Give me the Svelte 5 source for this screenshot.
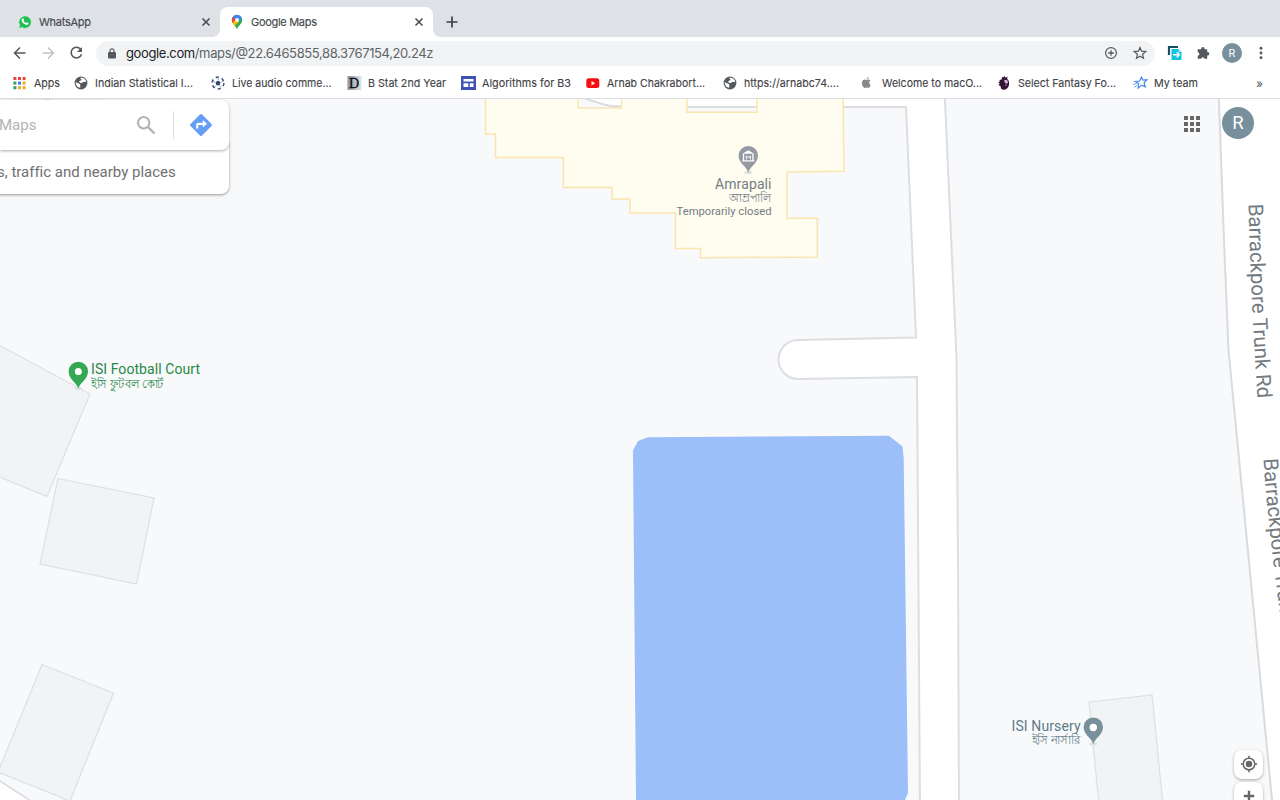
<script>
  const bookmarks = [
    { icon: 'apps', label: 'Apps', width: 61, text: 26 },
    { icon: 'globe', label: 'Indian Statistical I...', width: 137, text: 98 },
    { icon: 'ball', label: 'Live audio comme...', width: 136, text: 99.5 },
    { icon: 'dee', label: 'B Stat 2nd Year', width: 114, text: 78 },
    { icon: 'sites', label: 'Algorithms for B3', width: 125, text: 89 },
    { icon: 'youtube', label: 'Arnab Chakrabort...', width: 137, text: 98 },
    { icon: 'globe', label: 'https://arnabc74....', width: 138, text: 95 },
    { icon: 'apple', label: 'Welcome to macO...', width: 136, text: 100 },
    { icon: 'lion', label: 'Select Fantasy Fo...', width: 136, text: 98 },
    { icon: 'star', label: 'My team', width: 90, text: 44 }
  ];
  const dotColors = ['#e5453b', '#e5453b', '#e5453b', '#30a050', '#3c7ee8', '#efab24', '#30a050', '#efab24', '#efab24'];
  const gridCells = [0, 1, 2, 3, 4, 5, 6, 7, 8];
</script>

{#snippet cross()}
  <svg class="cross" width="10" height="10" viewBox="0 0 10 10"><path d="M1.500 1.500l7 7M8.500 1.500l-7 7" stroke="#45484c" stroke-width="1.500" /></svg>
{/snippet}

{#snippet pin(x, y, color)}
  <g transform="translate({x} {y})">
    <ellipse cx="0" cy="26.500" rx="4" ry="1.700" fill="#dfe2e4" />
    <path d="M0 27C-1 21-9.700 17.500-9.700 9.600A9.700 9.700 0 0 1 9.700 9.600C9.700 17.500 1 21 0 27z" fill={color} />
  </g>
{/snippet}

{#snippet bookmarkIcon(name)}
  <svg width="16" height="16" viewBox="0 0 16 16">
    {#if name === 'apps'}
      {#each dotColors as c, i}
        <rect x={.4 + (i % 3) * 4.6} y={2 + Math.floor(i / 3) * 4.6} width="3" height="3" fill={c} />
      {/each}
    {:else if name === 'globe'}
      <circle cx="7" cy="8" r="6.400" fill="#55585c" />
      <path d="M1.800 6.800c1.200 1.700 3.200 1.200 4.200 2.400.9 1.300-.2 2 .4 3.600C3.700 12.800 1.300 10 1.800 6.800zM6.300 3c2.500-.9 4.800.3 5.900 3.200-.3 1.200-1.600.6-2.500.5-1.200 0-1.200 1.500-2.600 1.400-1.500-.1-2.400-1.200-1.600-2 .6-.7 2.200-.2 2-1.500-.1-.7-1.300-.6-1.200-1.600z" fill="#fff" />
    {:else if name === 'ball'}
      <circle cx="7" cy="8" r="5.900" fill="none" stroke="#3f5080" stroke-width="1.500" stroke-dasharray="3.200 3" />
      <path d="M7 5.500l2.500 1.800-.9 2.900H5.400l-.9-2.900z" fill="#31426f" />
      <path d="M7 5V3M10 7l2-.5M9 10.500l1.200 1.700M5 10.500l-1.200 1.700M4 7L2 6.500" stroke="#8d9bc0" stroke-width=".9" />
    {:else if name === 'dee'}
      <defs><linearGradient id="dg"><stop offset="0" stop-color="#8f929b" /><stop offset="1" stop-color="#e3e4e8" /></linearGradient></defs>
      <rect x=".5" y="1" width="14" height="14" fill="url(#dg)" />
      <text x="2" y="13" font-family="Liberation Serif, serif" font-size="14" stroke="#08080c" stroke-width=".3" fill="#08080c">D</text>
    {:else if name === 'sites'}
      <rect x="0" y="1" width="15" height="14" fill="#3f51b5" />
      <path d="M2.500 4h10v2.600h-10zM2.500 8.200h4.800v3.900H2.500zM8.800 8.200h3.700v3.900H8.800z" fill="#fff" />
    {:else if name === 'youtube'}
      <rect x=".3" y="3.300" width="13" height="9.800" rx="2.500" fill="#f50f0f" />
      <path d="M5.500 6v4.400L9.100 8.200z" fill="#fff" />
    {:else if name === 'apple'}
      <path transform="translate(-1.200 0)" d="M7 4.100C7 2.700 8 1.800 8.700 1.700c.1 1.300-.7 2.300-1.700 2.400zM6.600 4.900c.6 0 1-.4 1.900-.4.800 0 1.600.4 2.100 1.100-1.800 1.100-1.500 3.600.3 4.300-.5 1.400-1.400 3.100-2.300 3.100-.7 0-.9-.4-1.700-.4s-1.100.4-1.700.4C3.700 13 2 9.900 2.200 7.700c.1-2 1.300-3.200 2.600-3.200.8 0 1.300.4 1.800.4z" fill="#88898b" />
    {:else if name === 'lion'}
      <path d="M5 1.500l1 1.300L7.500.8l.6 1.800 2.500-.6-.5 2c1.600.8 2.200 3 1.900 5.500-.2 2.500-2.200 5.300-5.200 5.300-2.400 0-3.300-1.600-3-3.300L1.500 10l1.300-1.300-1.500-1.400 1.700-1L2.300 5l2.400-.6z" fill="#351338" />
      <path d="M7.300 4.800l3 .4.800 2.500-1.800 1-1.800-1.500zM8 9.500l2 .3-1.200 1.200z" fill="#cfbccd" />
    {:else}
      <path d="M8.500 2.200l1.400 3 3.900-.5-2.700 3.100 1.200 4.100-3.500-1.800-3.700 3 .5-4.300L2.500 6.500l4-.5z" fill="none" stroke="#4386e8" stroke-width="1.200" />
      <path d="M.3 9.500l3.500-1.200M1.200 12.200l3-1.700M.8 6.500h2" stroke="#6aa2f2" stroke-width="1" />
    {/if}
  </svg>
{/snippet}

<div class="window">
  <header class="tabs">
    <div class="tab first">
      <svg width="14" height="14" viewBox="0 0 14 14">
        <path d="M.6 13.400l1-3.200A6.300 6.300 0 1 1 4 12.600z" fill="#20bf55" stroke="#f4f6f5" stroke-width=".6" />
        <path d="M4.300 3.500c.5-.5 1-.3 1.200.2l.5 1c.1.400-.6.800-.4 1.200.5 1 1.300 1.700 2.300 2.100.4.100.8-.9 1.200-.7l1.200.7c.6.400-.3 1.900-1.500 1.900C6.200 9.900 3.700 7 3.600 5.300c0-.8.200-1.400.7-1.800z" fill="#fff" />
      </svg>
      <svg class="tabtext" width="54" height="16"><text x="0" y="12" textLength="52">WhatsApp</text></svg>
      {@render cross()}
    </div>
    <div class="tab active">
      <svg width="12" height="16" viewBox="0 0 12 16">
        <defs><clipPath id="mp"><path d="M6 15.300C5.200 11.800.8 10 .8 5.900a5.200 5.200 0 0 1 10.400 0C11.200 10 6.800 11.800 6 15.300z" /></clipPath></defs>
        <g clip-path="url(#mp)">
          <rect width="12" height="16" fill="#34a853" />
          <path d="M0 9L4.200 4.500 8 7.500 2.500 13z" fill="#fbbc04" />
          <path d="M0 0h4L6 4 2 8.500-1 8z" fill="#ea4335" />
          <path d="M2.500 0H12v3.500L8 7 6 3.500 3.800 5 1.500 2.700z" fill="#4285f4" />
        </g>
        <circle cx="6" cy="5.900" r="1.900" fill="#fff" />
      </svg>
      <svg class="tabtext" width="69" height="16"><text x="0" y="12" textLength="66">Google Maps</text></svg>
      {@render cross()}
    </div>
    <svg class="plus" width="12" height="12" viewBox="0 0 12 12"><path d="M6 .5v11M.5 6h11" stroke="#3c4043" stroke-width="1.700" /></svg>
  </header>

  <div class="toolbar">
    <svg class="nav" width="14" height="14" viewBox="0 0 14 14"><path d="M12.500 7H2M7 1.500L1.500 7 7 12.500" fill="none" stroke="#55585c" stroke-width="1.500" /></svg>
    <svg class="nav" width="14" height="14" viewBox="0 0 14 14"><path d="M1.500 7H12M7 1.500L12.500 7 7 12.500" fill="none" stroke="#bfc1c4" stroke-width="1.500" /></svg>
    <svg class="nav" width="14" height="14" viewBox="0 0 14 14"><path d="M11.500 3.200A5.300 5.300 0 1 0 12.500 8.200" fill="none" stroke="#55585c" stroke-width="1.600" /><path d="M13 1v5H8z" fill="#55585c" /></svg>
    <div class="address">
      <svg width="8" height="11" viewBox="0 0 8 11"><rect y="4" width="8" height="6.500" rx="1" fill="#55585c" /><path d="M2 4.500V2.800a2 2 0 0 1 4 0v1.700" fill="none" stroke="#55585c" stroke-width="1.200" /></svg>
      <svg class="url" width="312" height="20"><text x="0" y="14.500" textLength="307.500" font-size="13"><tspan fill="#202124">google.com</tspan><tspan fill="#606368">/maps/@22.6465855,88.3767154,20.24z</tspan></text></svg>
      <svg class="zoomicon" width="14" height="14" viewBox="0 0 14 14"><circle cx="7" cy="7" r="5.400" fill="none" stroke="#55585c" stroke-width="1.200" /><path d="M7 4.200v5.600M4.200 7h5.600" stroke="#55585c" stroke-width="1.300" /></svg>
      <svg width="14" height="14" viewBox="0 0 14 14"><path d="M7 1.500l1.600 3.700 4.100.4-3.100 2.700.9 4L7 10.200l-3.500 2.100.9-4-3.100-2.700 4.100-.4z" fill="none" stroke="#55585c" stroke-width="1.200" /></svg>
    </div>
    <svg class="ext" width="16" height="16" viewBox="0 0 16 16">
      <path d="M2 10V2h9" fill="none" stroke="#184c69" stroke-width="2.200" />
      <path d="M4.500 4h7l3 3v8h-10z" fill="#16c1dc" /><path d="M11.500 4l3 3h-3z" fill="#9beaf4" />
      <path d="M6 9.700h6M9.800 7.200l2.500 2.500-2.500 2.500" fill="none" stroke="#fff" stroke-width="1.500" />
    </svg>
    <svg class="puzzle" width="14" height="14" viewBox="0 0 14 14"><path d="M4.300 3.200h1a1.700 1.700 0 1 1 3.200 0h2.700v3a1.700 1.700 0 1 1 0 3.300v3.300H8.400a1.600 1.600 0 0 0-3.200 0H1.700V9.700a1.700 1.700 0 0 0 0-3.400V3.200z" fill="#55585c" /></svg>
    <div class="small avatar">R</div>
    <svg class="dots" width="4" height="14" viewBox="0 0 4 14"><circle cx="2" cy="2.200" r="1.450" fill="#55585c" /><circle cx="2" cy="7" r="1.450" fill="#55585c" /><circle cx="2" cy="11.800" r="1.450" fill="#55585c" /></svg>
  </div>

  <nav class="bookmarks">
    {#each bookmarks as b}
      <div class="bookmark" style:width="{b.width}px">
        {@render bookmarkIcon(b.icon)}
        <svg class="label" width={b.text + 8} height="16"><text x="0" y="12" textLength={b.text} lengthAdjust="spacingAndGlyphs">{b.label}</text></svg>
      </div>
    {/each}
    <span class="more">»</span>
  </nav>

  <main>
    <svg class="map" width="1280" height="701" viewBox="0 99 1280 701">
      <rect y="99" width="1280" height="701" fill="#f7f9fb" />
      <path d="M16 90V108H101V90M38 98L56 101" fill="#f1f2f4" stroke="#dedfe1" />
      <g fill="#f1f3f4" stroke="#dddfe2" stroke-width="1.200">
        <path d="M-5 343L90 394 47 496.500-5 475z" />
        <path d="M58 478.500L154 498 136.500 584 40 564z" />
        <path d="M42 664.500L113.500 693 70 801-2 772z" />
        <path d="M1089 702L1152 695 1163 805 1099 805z" />
      </g>
      <path d="M-3 779L34 803H-3z" fill="#fff" stroke="#dadce0" stroke-width="1.700" />
      <path d="M560 90V107H906L916 337.500 798 340A19.500 19.500 0 0 0 798 379L917 377 920 810H959L958 560 956.500 358 944.500 90z" fill="#fff" stroke="#dcdee1" stroke-width="2" />
      <path d="M1218.500 90L1224 240 1228.500 350 1272.500 805H1290V90z" fill="#fff" stroke="#d9dbde" stroke-width="2" />
      <path fill-rule="evenodd" d="M485.500 90V134H495.500V157.500H563.500V187.500H612V199H630V213H675.500V248.500H700.500V257.800L817.300 257V218.300H787V172L844 171.300 843 90zM578 90V108H621.500V90zM687 90V112.300H757V90z" fill="#fffcf0" stroke="#fbe5ad" stroke-width="1.500" />
      <path d="M578.800 99V107.300H620.800V99z" fill="#f7f9fb" />
      <path d="M585 98Q603 105 613 106.200H620.700V98z" fill="#fff" />
      <path d="M584 98Q603 105 613 106.200H620.700" fill="none" stroke="#d9dbde" stroke-width="2" />
      <path d="M633 450.500L638 441 648 437.300 889 435.700 902.500 446.500 903.700 458 908 793 905 800H636z" fill="#9cbff9" />

      {@render pin(748.300, 146, '#9599a3')}
      <path d="M742.300 153.800L748.300 150.300 754.300 153.800z" fill="#fff" />
      <path d="M743.500 154V160.500M753 154V160.500M742.300 160.800H754.300" fill="none" stroke="#fff" stroke-width="1.300" />
      <path d="M746.300 159.500V155.800L748.300 157.800 750.300 155.800V159.500" fill="none" stroke="#fff" stroke-width="1" />
      <g fill="#757c85" class="place" text-anchor="end">
        <text x="771.500" y="189" font-size="14" textLength="56.500">Amrapali</text>
        <text x="771.500" y="202" font-size="11.500" textLength="43" lengthAdjust="spacingAndGlyphs">আম্রপালি</text>
        <text x="771.500" y="215" font-size="11" textLength="95" lengthAdjust="spacingAndGlyphs">Temporarily closed</text>
      </g>
      {@render pin(78.300, 361.800, '#34a853')}
      <circle cx="78.300" cy="371.500" r="3.500" fill="#fff" />
      <g fill="#298846" class="place">
        <text x="91" y="374.300" font-size="14" textLength="109">ISI Football Court</text>
        <text x="91" y="387.500" font-size="11.500" textLength="73" lengthAdjust="spacingAndGlyphs">ইসি ফুটবল কোর্ট</text>
      </g>
      {@render pin(1093.300, 717.500, '#78909c')}
      <circle cx="1093.300" cy="727.500" r="3.700" fill="#fff" />
      <g fill="#607986" class="place" text-anchor="end">
        <text x="1080.500" y="730.500" font-size="14" textLength="69">ISI Nursery</text>
        <text x="1080.500" y="743.500" font-size="11.500" textLength="49" lengthAdjust="spacingAndGlyphs">ইসি নার্সারি</text>
      </g>
      <defs>
        <path id="road1" d="M1248.500 204Q1251 306 1259 420" />
        <path id="road2" d="M1263.500 459Q1269 545 1291 690" />
      </defs>
      <g class="place" fill="#737a80" font-size="20.500">
        <text textLength="195"><textPath href="#road1">Barrackpore Trunk Rd</textPath></text>
        <text textLength="195"><textPath href="#road2">Barrackpore Trunk Rd</textPath></text>
      </g>
    </svg>

    <section class="search">
      <div class="hint">s, traffic and nearby places</div>
      <div class="box">
        <span>Maps</span>
        <svg class="lens" width="20" height="20" viewBox="0 0 20 20"><circle cx="7.700" cy="7.700" r="5.700" fill="none" stroke="#b1b1b1" stroke-width="2" /><path d="M12 12l6.500 6.500" stroke="#b1b1b1" stroke-width="2.400" /></svg>
        <i></i>
        <svg class="directions" width="24" height="24" viewBox="0 0 24 24"><path d="M10.900 1.500a1.500 1.500 0 0 1 2.200 0l9.400 9.400a1.500 1.500 0 0 1 0 2.200l-9.400 9.400a1.500 1.500 0 0 1-2.200 0l-9.400-9.400a1.500 1.500 0 0 1 0-2.200z" fill="#669df6" /><path d="M8.200 15.500V12q0-1.200 1.200-1.200H14.500" fill="none" stroke="#fff" stroke-width="2.200" /><path d="M13.800 7l4.200 3.800-4.200 3.800z" fill="#fff" /></svg>
      </div>
    </section>
    <div class="account">
      <div class="launcher">{#each gridCells as cell (cell)}<b></b>{/each}</div>
      <div class="avatar">R</div>
    </div>
    <div class="controls">
      <button aria-label="Show your location"><svg width="18" height="18" viewBox="0 0 18 18"><circle cx="9" cy="9" r="5.800" fill="none" stroke="#666" stroke-width="1.500" /><circle cx="9" cy="9" r="3.300" fill="#666" /><path d="M9 .8v3M9 14.200v3M.8 9h3M14.200 9h3" stroke="#666" stroke-width="1.500" /></svg></button>
      <button aria-label="Zoom in"><svg width="18" height="18" viewBox="0 0 18 18"><path d="M9 3.800v10.400M3.800 9h10.400" stroke="#666" stroke-width="2.400" /></svg></button>
    </div>
  </main>
</div>

<style>
  :global(body) { margin: 0; overflow: hidden; }
  .window { width: 1280px; height: 800px; overflow: hidden; display: flex; flex-direction: column; font-family: Inter, "Liberation Sans", sans-serif; background: #fff; }
  svg { display: block; flex: none; }
  .tabs { height: 37px; flex: none; background: #dee1e6; display: flex; align-items: flex-end; box-sizing: border-box; }
  .tab { height: 30px; display: flex; align-items: center; box-sizing: border-box; font-size: 11px; }
  .tabtext { margin-right: auto; }
  .tab text { fill: #45494d; font-size: 11px; stroke: #45494d; stroke-width: .15px; }
  .first { width: 220px; padding: 0 9px 0 18px; }
  .first .tabtext { margin-left: 7px; }
  .active { width: 213px; background: #fff; border-radius: 8px 8px 0 0; padding: 0 9px 0 11px; position: relative; }
  .active .tabtext { margin-left: 8px; }
  .active::before, .active::after { content: ""; position: absolute; bottom: 0; width: 7px; height: 7px; }
  .active::before { left: -7px; background: radial-gradient(circle at 0 0, transparent 6.500px, #fff 7px); }
  .active::after { right: -7px; background: radial-gradient(circle at 100% 0, transparent 6.500px, #fff 7px); }
  .plus { margin: 0 0 9px 13px; }
  .toolbar { height: 33px; flex: none; display: flex; align-items: center; padding: 0 0 1px 13px; box-sizing: border-box; }
  .nav { margin-right: 14px; }
  .nav + .nav + .nav { margin-right: 13px; }
  .address { width: 1059px; height: 25px; border-radius: 13px; background: #f1f3f4; display: flex; align-items: center; padding: 0 8px 0 12px; box-sizing: border-box; }
  .url { margin-left: 10px; margin-right: auto; }
  .zoomicon { margin-right: 15px; }
  .ext { margin-left: 12px; }
  .puzzle { margin-left: 13px; }
  .avatar { width: 32px; height: 32px; border-radius: 50%; background: #78909c; color: #fff; display: flex; align-items: center; justify-content: center; font: 18.500px Roboto, sans-serif; }
  .small { width: 20px; height: 20px; font-size: 11px; margin-left: 12px; }
  .dots { margin-left: 16.500px; }
  .bookmarks { height: 29px; flex: none; display: flex; align-items: center; padding: 0 0 2px 13px; border-bottom: 1px solid #dcdee1; box-sizing: border-box; }
  .bookmark { display: flex; align-items: center; flex: none; }
  .label { margin-left: 5px; }
  .label text { font-size: 11px; fill: #3f4246; stroke: #3f4246; stroke-width: .12px; }
  .more { font-size: 12px; color: #505357; margin-left: 33px; }
  main { flex: 1; position: relative; min-height: 0; }
  .place { font-family: Roboto, "Noto Sans", sans-serif; }
  .search { position: absolute; left: 0; top: 0; width: 229px; height: 95px; display: flex; flex-direction: column-reverse; font-family: Roboto, sans-serif; font-size: 15px; }
  .hint { height: 52px; margin-top: -8px; padding-top: 8px; box-sizing: border-box; display: flex; align-items: center; background: #fff; color: #707070; border-radius: 0 0 8px 0; box-shadow: 0 1px 3px #0006; white-space: nowrap; letter-spacing: -.01px; margin-left: -3px; }
  .box { height: 50px; margin-top: 1px; display: flex; align-items: center; background: #fff; border-radius: 0 8px 8px 0; box-shadow: 0 1px 3px #0005; color: #b3b3b3; z-index: 1; }
  .lens { margin-left: auto; }
  .box span { margin-left: -1px; }
  i { height: 28px; width: 1px; background: #dedede; margin: 0 15px 0 17px; }
  .directions { margin-right: 16px; }
  .account { position: absolute; top: 8px; right: 26px; display: flex; align-items: center; gap: 21px; }
  .launcher { display: grid; grid-template-columns: repeat(3, 4px); gap: 2px; padding: 1px 1px 0 0; }
  b { width: 4px; height: 4px; background: #666; }
  .controls { position: absolute; right: 17px; top: 650.500px; display: flex; flex-direction: column; gap: 3px; }
  button { width: 29px; height: 29px; padding: 0; border: 0; border-radius: 8px; background: #fff; box-shadow: 0 1px 3px #0005; display: flex; align-items: center; justify-content: center; }
</style>
